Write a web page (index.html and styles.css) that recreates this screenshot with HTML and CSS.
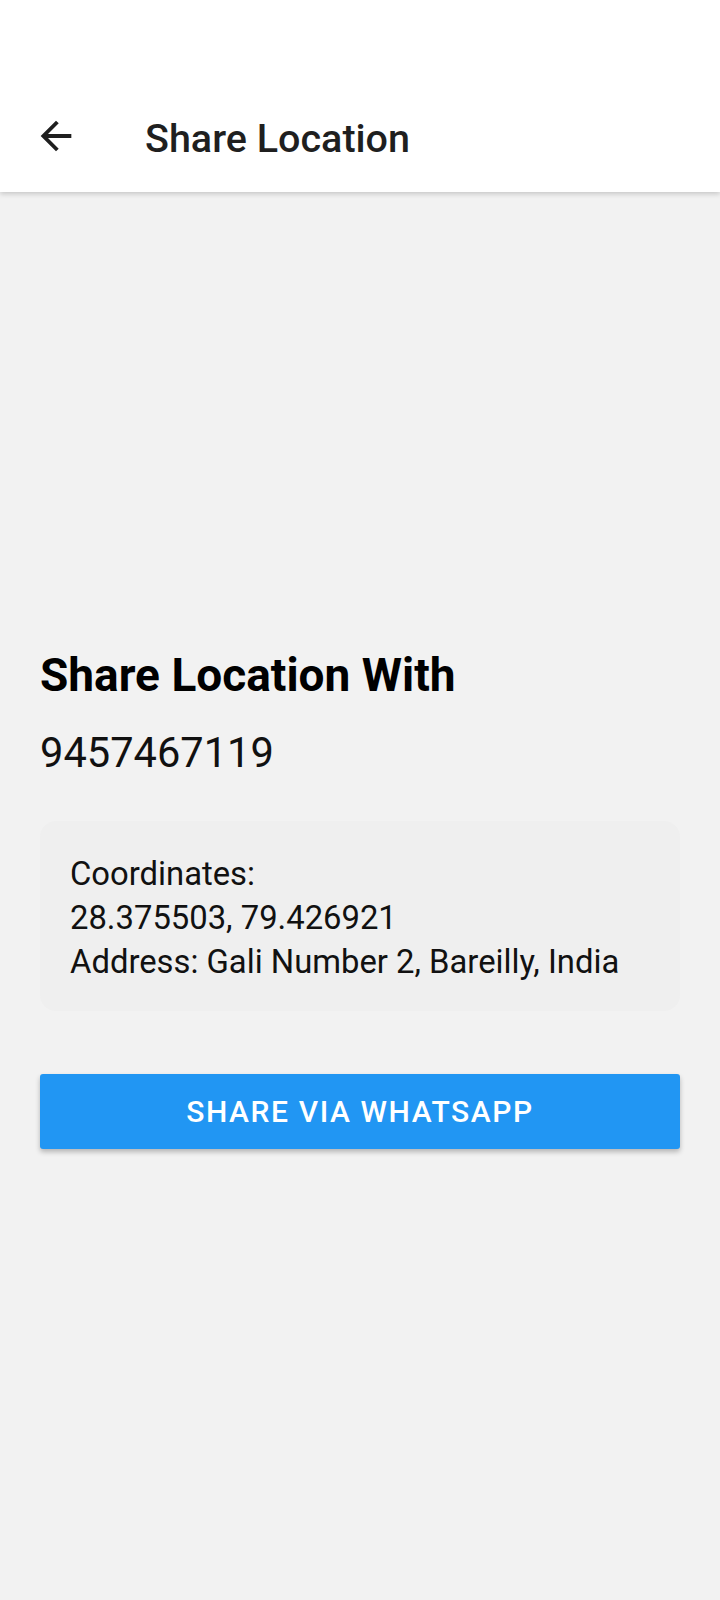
FILE: index.html
```html
<!DOCTYPE html>
<html>
<head>
<meta charset="utf-8">
<link rel="stylesheet" href="styles.css">
</head>
<body>
<header class="appbar">
  <div class="toolbar">
    <button class="back" aria-label="Back">
      <svg viewBox="0 0 24 24" width="46" height="46"><path d="M20 11H7.83l5.59-5.59L12 4l-8 8 8 8 1.41-1.41L7.83 13H20v-2z" fill="#1f1f1f"/></svg>
    </button>
    <h1 class="title">Share Location</h1>
  </div>
</header>
<main class="content">
  <div class="block">
    <h2 class="heading">Share Location With</h2>
    <div class="phone">9457467119</div>
    <div class="card">
      <p>Coordinates:<br>28.375503, 79.426921<br>Address: Gali Number 2, Bareilly, India</p>
    </div>
    <button class="share">SHARE VIA WHATSAPP</button>
  </div>
</main>
</body>
</html>
```
FILE: styles.css
```css
html, body {
  margin: 0;
  padding: 0;
}
body {
  width: 720px;
  height: 1600px;
  background: #f2f2f2;
  font-family: Roboto, "Noto Sans", sans-serif;
  color: #111;
  display: flex;
  flex-direction: column;
  overflow: hidden;
}
.appbar {
  background: #fff;
  padding-top: 80px;
  height: 112px;
  box-shadow: 0 2px 5px rgba(0,0,0,0.18);
  position: relative;
  z-index: 1;
  flex: none;
}
.toolbar {
  height: 112px;
  display: flex;
  align-items: center;
}
.back {
  border: 0;
  background: none;
  padding: 0;
  margin-left: 33px;
  width: 46px;
  height: 46px;
  display: flex;
}
.title {
  margin: 4px 0 0 66px;
  font-size: 39.5px;
  font-weight: 500;
  color: #1f1f1f;
}
.content {
  flex: 1;
  display: flex;
  flex-direction: column;
  justify-content: center;
  padding: 5px 40px 0;
}
.heading {
  margin: 0;
  font-size: 46px;
  font-weight: 700;
  color: #000;
  line-height: 54px;
}
.phone {
  margin-top: 27px;
  font-size: 41.6px;
  line-height: 48px;
  color: #111;
}
.card {
  margin-top: 44px;
  background: #efefef;
  border-radius: 16px;
  padding: 31px 30px 27px;
}
.card p {
  margin: 0;
  font-size: 32.8px;
  line-height: 44px;
  color: #111;
}
.share {
  margin-top: 63px;
  width: 640px;
  height: 75px;
  border: 0;
  border-radius: 3px;
  background: #2196f3;
  color: #fff;
  font-family: Roboto, sans-serif;
  font-size: 30px;
  font-weight: 500;
  letter-spacing: 1.6px;
  box-shadow: 0 3px 5px rgba(0,0,0,0.25);
}
```
